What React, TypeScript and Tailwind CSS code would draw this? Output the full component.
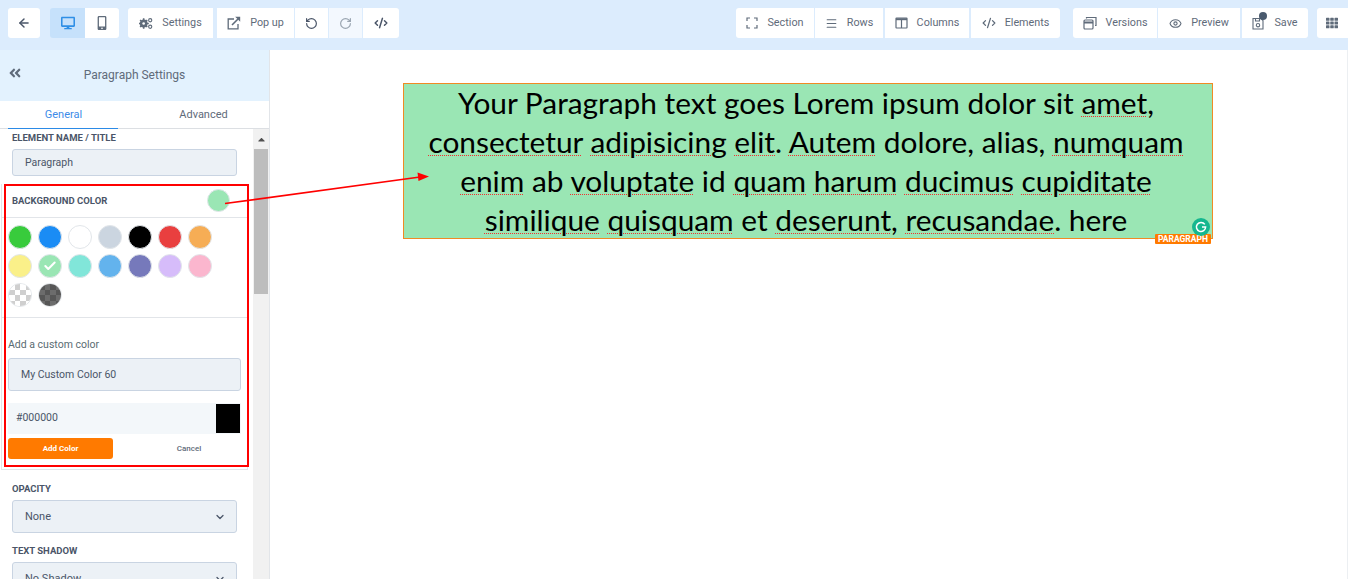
import { ArrowLeft, ChevronDown, CodeXml, Eye, Menu, RotateCcw, RotateCw, Check } from 'lucide-react';
import { FaAngleDoubleLeft, FaCaretUp, FaDesktop, FaMobileAlt, FaTh } from 'react-icons/fa';
import type { ReactNode } from 'react';

function Btn({ icon, label, w, gap = 'gap-[9px]', className = '' }: { icon: ReactNode; label?: string; w: string; gap?: string; className?: string }) {
  return (
    <div className={`h-[30px] shrink-0 flex items-center justify-center text-[10.8px] text-[#5f6b7a] ${gap} ${w} ${className}`}>
      {icon}
      {label && <span>{label}</span>}
    </div>
  );
}

function Gears() {
  return (
    <svg width="14" height="13" viewBox="0 0 15 13" fill="none">
      <circle cx="5" cy="6.5" r="3" stroke="#5f6b7a" strokeWidth="2.4" />
      <path d="M5 1v11M-0.5 6.5h11M1.2 2.7l7.6 7.6M8.8 2.7l-7.6 7.6" stroke="#5f6b7a" strokeWidth="1.7" />
      <circle cx="5" cy="6.5" r="1.4" fill="#fff" />
      <circle cx="12" cy="3" r="1.7" stroke="#5f6b7a" strokeWidth="1.2" />
      <circle cx="12" cy="10" r="1.7" stroke="#5f6b7a" strokeWidth="1.2" />
    </svg>
  );
}

function PopUpIcon() {
  return (
    <svg width="14" height="14" viewBox="0 0 14 14" fill="none" stroke="#5f6b7a">
      <path d="M7 3H1.2v9.8H11V8" strokeWidth="1.3" />
      <path d="M5 9l6-6" strokeWidth="1.6" />
      <path d="M8.2 0.8h5v5z" fill="#5f6b7a" stroke="none" />
    </svg>
  );
}

function SectionIcon() {
  return (
    <svg width="12" height="12" viewBox="0 0 12 12" fill="none" stroke="#5f6b7a" strokeWidth="1.2">
      <path d="M1 4V1h3M8 1h3v3M11 8v3H8M4 11H1V8" />
    </svg>
  );
}

function ColumnsIcon() {
  return (
    <svg width="13" height="12" viewBox="0 0 13 12" fill="none" stroke="#5f6b7a" strokeWidth="1.2">
      <rect x="1" y="1" width="11" height="10" rx="0.5" />
      <path d="M1 2.2h11" strokeWidth="2" />
      <path d="M6.5 2v9" />
    </svg>
  );
}

function Copies() {
  return (
    <svg width="14" height="14" viewBox="0 0 14 14" fill="none" stroke="#5f6b7a" strokeWidth="1.2">
      <rect x="1" y="4" width="9" height="9" rx="1" />
      <path d="M1 6.5h9" strokeWidth="2" />
      <path d="M3.5 2.5V1.5h9.5v8h-1" />
    </svg>
  );
}

function SaveIcon() {
  return (
    <div className="relative w-[14px] h-[14px]">
      <svg width="12" height="13" viewBox="0 0 12 13" fill="none" stroke="#5f6b7a" strokeWidth="1.1" className="mt-[1px]">
        <path d="M1 1.5h8l2 2v8.5H1z" />
        <path d="M3.5 1.5v2.5h4V1.5" />
        <circle cx="6" cy="8.2" r="1.7" />
      </svg>
      <span className="absolute -top-[4px] left-[7px] w-[8px] h-[8px] rounded-full bg-[#4a5a6e]" />
    </div>
  );
}

const swatches = ['#38cb3c', '#1a8cf5', '#ffffff', '#cbd5e0', '#000000', '#e93f3f', '#f6ad55', '#faf089', '#9ae6b4', '#81e6d9', '#63b3ed', '#7679bb', '#d6bcfa', '#fbb6ce'];

function Swatch({ color, checked }: { color: string; checked?: boolean }) {
  return (
    <div className="w-[24px] h-[24px] rounded-full border border-[#e2e6ea] flex items-center justify-center" style={{ backgroundColor: color }}>
      {checked && <Check size={14} strokeWidth={3.5} color="#fff" />}
    </div>
  );
}

function Checker({ dark }: { dark?: boolean }) {
  const a = dark ? 'bg-[#565656]' : 'bg-white';
  const b = dark ? 'bg-[#6c6c6c]' : 'bg-[#cfcfcf]';
  return (
    <div className="w-[24px] h-[24px] rounded-full border border-[#e2e6ea] overflow-hidden grid grid-cols-4 grid-rows-4">
      {Array.from({ length: 16 }).map((_, i) => (
        <div key={i} className={(i + Math.floor(i / 4)) % 2 === 0 ? a : b} />
      ))}
    </div>
  );
}

function Sp({ children }: { children: ReactNode }) {
  return <span className="[text-decoration-line:underline] [text-decoration-style:dotted] [text-decoration-color:#f03030] [text-decoration-thickness:1px] [text-underline-offset:2px]">{children}</span>;
}

function Label({ children, className = '' }: { children: ReactNode; className?: string }) {
  return <div className={`text-[9.5px] leading-[12px] font-bold text-[#4a5568] ${className}`}>{children}</div>;
}

function Select({ value, className = '' }: { value: string; className?: string }) {
  return (
    <div className={`mx-[12px] w-[225px] h-[33px] shrink-0 rounded-[3px] border border-[#c9d4e2] bg-[#ecf1f6] flex items-center justify-between pl-[12px] pr-[10px] pt-[1px] text-[11px] text-[#4a5568] ${className}`}>
      <span>{value}</span>
      <ChevronDown size={12} strokeWidth={2.5} color="#4a5568" />
    </div>
  );
}

export default function App() {
  return (
    <div className="relative w-[1348px] h-[579px] overflow-hidden bg-white font-['Roboto',sans-serif]">
      <div className="h-[50px] bg-[#dcecfd] flex items-start pt-[8px] pl-[8px]">
        <Btn icon={<ArrowLeft size={14} strokeWidth={2.5} color="#4a5568" />} w="w-[32px]" className="bg-white rounded-[3px]" />
        <div className="ml-[10px] flex rounded-[3px] overflow-hidden">
          <Btn icon={<FaDesktop size={14} color="#2f8fe6" />} w="w-[35px]" className="bg-[#c6e1fb]" />
          <Btn icon={<FaMobileAlt size={14} color="#5f6b7a" />} w="w-[34px]" className="bg-white" />
        </div>
        <Btn icon={<Gears />} label="Settings" w="w-[85px]" className="ml-[9px] bg-white rounded-l-[3px]" />
        <Btn icon={<PopUpIcon />} label="Pop up" w="w-[77px]" className="ml-[4px] bg-white" />
        <Btn icon={<RotateCcw size={13} strokeWidth={2.2} color="#4a5568" />} w="w-[33px]" className="ml-[1px] bg-white" />
        <Btn icon={<RotateCw size={13} strokeWidth={2.2} color="#9aa5b1" />} w="w-[33px]" className="ml-[1px] bg-[#f3f8fe]" />
        <Btn icon={<CodeXml size={14} strokeWidth={2.5} color="#4a5568" />} w="w-[36px]" className="ml-[1px] bg-white rounded-r-[3px]" />
        <div className="flex-1" />
        <Btn icon={<SectionIcon />} label="Section" w="w-[78px]" className="bg-white rounded-l-[3px]" />
        <Btn icon={<Menu size={13} color="#5f6b7a" />} label="Rows" w="w-[68px]" className="ml-[1px] bg-white" />
        <Btn icon={<ColumnsIcon />} label="Columns" w="w-[84px]" className="ml-[2px] bg-white" />
        <Btn icon={<CodeXml size={14} strokeWidth={2.2} color="#5f6b7a" />} label="Elements" w="w-[89px]" className="ml-[2px] bg-white rounded-r-[3px]" />
        <Btn icon={<Copies />} label="Versions" w="w-[84px]" className="ml-[13px] bg-white rounded-l-[3px]" />
        <Btn icon={<Eye size={13} color="#5f6b7a" />} label="Preview" w="w-[82px]" className="ml-[1px] bg-white" />
        <Btn icon={<SaveIcon />} label="Save" w="w-[66px]" gap="gap-[8px]" className="ml-[2px] bg-white rounded-r-[3px]" />
        <Btn icon={<FaTh size={12} color="#5f6b7a" />} w="w-[31px]" className="ml-[9px] bg-white rounded-l-[3px] pr-[1px]" />
      </div>

      <div className="flex h-[529px]">
        <aside className="w-[270px] shrink-0 border-r border-[#e2e5e9] flex flex-col overflow-hidden">
          <div className="h-[51px] shrink-0 bg-[#e3f2fe] relative flex items-center justify-center pb-[2px] text-[12px] text-[#5f6b7a]">
            <FaAngleDoubleLeft size={14} color="#5f6b7a" className="absolute left-[8px] top-[16px]" />
            <span>Paragraph Settings</span>
          </div>
          <div className="h-[28px] shrink-0 flex border-b border-[#dcdfe3] text-[11px]">
            <div className="ml-[8px] w-[110px] pl-[1px] text-center leading-[27px] text-[#3d8be8] border-b-[1px] border-[#2b8ae6] h-[28px]">General</div>
            <div className="flex-1 pl-[20px] text-center leading-[27px] text-[#5f6b7a]">Advanced</div>
          </div>
          <div className="flex flex-1 min-h-0">
            <div className="w-[253px] shrink-0 flex flex-col">
              <Label className="pl-[12px] pt-[3px]">ELEMENT NAME / TITLE</Label>
              <div className="mt-[5px] mx-[12px] w-[225px] h-[27px] shrink-0 rounded-[3px] border border-[#c9d4e2] bg-[#ecf1f6] pl-[12px] text-[10.5px] leading-[25px] text-[#4a5568]">Paragraph</div>
              <div className="mt-[8px] ml-[1px] w-[247px] h-[286px] shrink-0 border border-t-0 border-[#e2e5e9] flex flex-col">
                <div className="h-[34px] shrink-0 flex items-center justify-between pl-[10px] pr-[17px] border-b border-[#e2e5e9]">
                  <Label>BACKGROUND COLOR</Label>
                  <div className="w-[23px] h-[23px] rounded-full bg-[#9ae6b4] border border-[#e2e6ea]" />
                </div>
                <div className="h-[100px] shrink-0 pt-[7px] pl-[6px] pr-[30px] border-b border-[#e2e5e9] flex flex-wrap content-start gap-x-[6px] gap-y-[5px] w-full">
                  {swatches.map((c, i) => (
                    <Swatch key={i} color={c} checked={i === 8} />
                  ))}
                  <Checker />
                  <Checker dark />
                </div>
                <div className="mt-[21px] pl-[6px] text-[10.5px] leading-[12px] text-[#5a6b72]">Add a custom color</div>
                <div className="mt-[7px] ml-[6px] w-[233px] h-[33px] shrink-0 rounded-[3px] border border-[#c9d4e2] bg-[#ecf1f6] pl-[12px] text-[10.5px] leading-[31px] text-[#4a5568]">My Custom Color 60</div>
                <div className="mt-[12px] ml-[6px] w-[233px] h-[31px] shrink-0 bg-[#f3f7fa] flex items-center justify-between pl-[8px] pr-[1px] pb-[2px] text-[10.5px] text-[#4a5568]">
                  <span>#000000</span>
                  <div className="w-[24px] h-[29px] mt-[2px] bg-black" />
                </div>
                <div className="mt-[4px] ml-[6px] flex items-center">
                  <div className="w-[105px] h-[21px] rounded-[3px] bg-[#ff7a00] text-center text-[8px] font-bold leading-[22px] text-white">Add Color</div>
                  <div className="ml-[50px] w-[52px] pt-[1px] text-center text-[8px] font-medium text-[#5f6b7a]">Cancel</div>
                </div>
              </div>
              <Label className="pl-[12px] mt-[13px]">OPACITY</Label>
              <Select value="None" className="mt-[5px]" />
              <Label className="pl-[12px] mt-[12px]">TEXT SHADOW</Label>
              <Select value="No Shadow" className="mt-[5px]" />
            </div>
            <div className="flex-1 bg-[#f1f1f1] flex flex-col items-center">
              <FaCaretUp size={11} color="#505050" className="mt-[5px]" />
              <div className="mt-[4px] w-[14px] h-[145px] bg-[#bdbdbd]" />
            </div>
          </div>
        </aside>

        <main className="flex-1 pt-[33px] pl-[133px] border-r border-[#eceff2]">
          <div className="w-[810px] h-[156px] border border-[#f08a24] bg-[#9ae6b4] relative text-center font-['Lato',sans-serif] text-[29.85px] leading-[39px] text-black">
            <div className="-mt-[1px] pr-[4px]">
              Your Paragraph text goes Lorem ipsum dolor sit <Sp>amet</Sp>, <Sp>consectetur</Sp> <Sp>adipisicing</Sp> <Sp>elit</Sp>. <Sp>Autem</Sp> dolore, alias, <Sp>numquam</Sp> <Sp>enim</Sp> ab <Sp>voluptate</Sp> id <Sp>quam</Sp> <Sp>harum</Sp> <Sp>ducimus</Sp> <Sp>cupiditate</Sp> <Sp>similique</Sp> <Sp>quisquam</Sp> et <Sp>deserunt</Sp>, <Sp>recusandae</Sp>. here
            </div>
            <div className="absolute right-[1px] -bottom-[6px] h-[10px] px-[3px] rounded-[1px] bg-[#ff7a00] font-['Roboto',sans-serif] text-[8.5px] leading-[10px] font-bold text-white">PARAGRAPH</div>
            <div className="absolute right-[2px] bottom-[2px] w-[18px] h-[18px] rounded-full bg-[#15b78f] flex items-center justify-center">
              <svg width="12" height="12" viewBox="0 0 12 12" fill="none" stroke="#fff" strokeWidth="1.5">
                <path d="M9.8 3.4A4.6 4.6 0 1 0 10.6 6H7" />
              </svg>
            </div>
          </div>
        </main>
      </div>

      <div className="absolute left-[4px] top-[184px] w-[245px] h-[283px] border-2 border-[#ff0000]" />
      <svg className="absolute left-0 top-0 pointer-events-none" width="1348" height="579" fill="none">
        <path d="M225 203.5 L420 177" stroke="#ff0000" strokeWidth="1.7" />
        <path d="M429 176.5 L417.5 172.5 L418.5 181 Z" fill="#ff0000" />
      </svg>
    </div>
  );
}
